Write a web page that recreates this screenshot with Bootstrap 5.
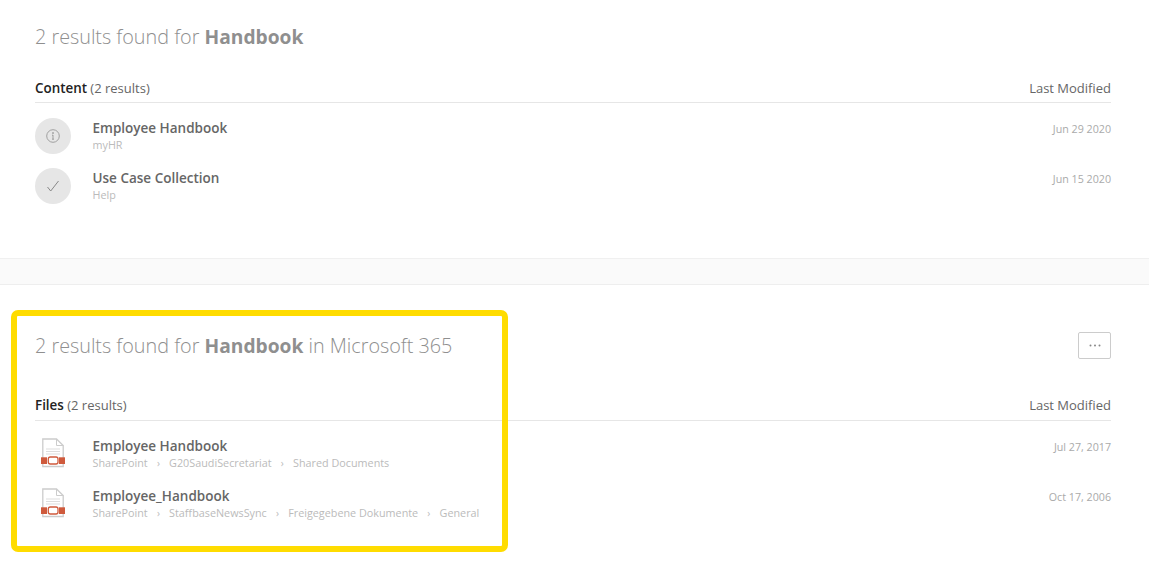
<!DOCTYPE html>
<html lang="en">
<head>
<meta charset="utf-8">
<title>Search results</title>
<link rel="stylesheet" href="https://cdn.jsdelivr.net/npm/bootstrap@5.3.0/dist/css/bootstrap.min.css">
<style>
html,body{height:570px;overflow:hidden}
body{background:#fff;font-family:"Open Sans",sans-serif;position:relative}
.res-panel{padding:0 38px 0 35px}
.res-panel-top{height:258px;padding-top:22px}
.res-band{height:27px;background:#fafafa;border-top:1px solid #f0f0f0;border-bottom:1px solid #eee}
.res-panel-bottom{padding-top:46px}
.res-title{font-size:19.8px;font-weight:300;line-height:30px;color:#8f8f8f;margin:0}
.res-title b{font-weight:700;font-size:19.2px}
.res-head{height:24px;margin-top:27px;border-bottom:1px solid #e6e6e6;font-size:13px;line-height:18px;color:#666}
.res-panel-bottom .res-head{height:25px;margin-top:35px}
.res-head b{font-weight:600;font-size:13.4px;color:#222}
.res-list{padding-top:15px}
.res-panel-bottom .res-list{padding-top:16px}
.res-row{height:50px}
.res-ico{width:36px;height:36px;flex:none;margin-right:21.5px}
.res-circle{border-radius:50%;background:#e6e6e6}
.res-name{font-size:13.5px;font-weight:600;line-height:19px;color:#666;margin-top:1px}
.res-path{font-size:10.8px;line-height:14px;color:#bbb;white-space:nowrap}
.res-panel-bottom .res-name{margin-top:0}
.res-sep{margin:0 9.2px;font-size:10px}
.res-date{font-size:10.7px;line-height:14px;color:#aaa;margin-top:4px}
.res-panel-bottom .res-date{margin-top:3px}
.res-more{width:33px;height:27px;border:1px solid #ccc;border-radius:2px;background:#fff;padding:0;margin-top:1px}
.res-doc{margin-top:1px}
.res-highlight{position:absolute;left:11px;top:310px;width:497px;height:242px;border:6px solid #ffdc00;border-radius:7px;pointer-events:none}
</style>
</head>
<body>
<section class="res-panel res-panel-top">
  <h2 class="res-title">2 results found for <b>Handbook</b></h2>
  <div class="res-head d-flex justify-content-between"><span><b>Content</b> (2 results)</span><span>Last Modified</span></div>
  <div class="res-list">
    <div class="res-row d-flex">
      <div class="res-ico res-circle d-flex align-items-center justify-content-center">
        <svg width="14" height="14" viewBox="0 0 14 14" fill="none" stroke="#999" stroke-width=".9"><circle cx="7" cy="7" r="6.3"/><path d="M7 6v4.2M6 6.2h1M6 10.2h2"/><circle cx="7" cy="4" r=".5" fill="#999"/></svg>
      </div>
      <div class="flex-grow-1"><div class="res-name">Employee Handbook</div><div class="res-path">myHR</div></div>
      <div class="res-date">Jun 29 2020</div>
    </div>
    <div class="res-row d-flex">
      <div class="res-ico res-circle d-flex align-items-center justify-content-center">
        <svg width="14" height="14" viewBox="0 0 14 14" fill="none" stroke="#888" stroke-width="1"><path d="M1.5 8l3.2 4L12.5 2"/></svg>
      </div>
      <div class="flex-grow-1"><div class="res-name">Use Case Collection</div><div class="res-path">Help</div></div>
      <div class="res-date">Jun 15 2020</div>
    </div>
  </div>
</section>
<div class="res-band"></div>
<section class="res-panel res-panel-bottom">
  <div class="d-flex justify-content-between align-items-start">
    <h2 class="res-title">2 results found for <b>Handbook</b> in Microsoft 365</h2>
    <button class="res-more d-flex align-items-center justify-content-center" type="button" aria-label="More">
      <svg width="12" height="3" viewBox="0 0 12 3" fill="#888"><circle cx="1.5" cy="1.5" r="1"/><circle cx="6" cy="1.5" r="1"/><circle cx="10.5" cy="1.5" r="1"/></svg>
    </button>
  </div>
  <div class="res-head d-flex justify-content-between"><span><b>Files</b> (2 results)</span><span>Last Modified</span></div>
  <div class="res-list">
    <div class="res-row d-flex">
      <div class="res-ico d-flex justify-content-center">
        <svg class="res-doc" width="24" height="30" viewBox="0 0 24 30" fill="none"><path d="M1.8 1h13.7l6.7 6.5v21H1.8z" fill="#fff" stroke="#ccc" stroke-width="1.3"/><path d="M15.5 1v6.5h6.7" stroke="#ccc"/><path d="M5 11h14M5 13.5h14M5 16h14" stroke="#ddd"/><rect y="19.3" width="6" height="6.7" fill="#cf5a3c"/><rect x="18" y="19.3" width="6" height="6.7" fill="#cf5a3c"/><rect x="7.3" y="19" width="9.7" height="7" rx="2" stroke="#cf5a3c" stroke-width="1.3"/></svg>
      </div>
      <div class="flex-grow-1"><div class="res-name">Employee Handbook</div><div class="res-path">SharePoint<span class="res-sep">›</span>G20SaudiSecretariat<span class="res-sep">›</span>Shared Documents</div></div>
      <div class="res-date">Jul 27, 2017</div>
    </div>
    <div class="res-row d-flex">
      <div class="res-ico d-flex justify-content-center">
        <svg class="res-doc" width="24" height="30" viewBox="0 0 24 30" fill="none"><path d="M1.8 1h13.7l6.7 6.5v21H1.8z" fill="#fff" stroke="#ccc" stroke-width="1.3"/><path d="M15.5 1v6.5h6.7" stroke="#ccc"/><path d="M5 11h14M5 13.5h14M5 16h14" stroke="#ddd"/><rect y="19.3" width="6" height="6.7" fill="#cf5a3c"/><rect x="18" y="19.3" width="6" height="6.7" fill="#cf5a3c"/><rect x="7.3" y="19" width="9.7" height="7" rx="2" stroke="#cf5a3c" stroke-width="1.3"/></svg>
      </div>
      <div class="flex-grow-1"><div class="res-name">Employee_Handbook</div><div class="res-path">SharePoint<span class="res-sep">›</span>StaffbaseNewsSync<span class="res-sep">›</span>Freigegebene Dokumente<span class="res-sep">›</span>General</div></div>
      <div class="res-date">Oct 17, 2006</div>
    </div>
  </div>
</section>
<div class="res-highlight"></div>
<script src="https://cdn.jsdelivr.net/npm/bootstrap@5.3.0/dist/js/bootstrap.bundle.min.js"></script>
</body>
</html>
